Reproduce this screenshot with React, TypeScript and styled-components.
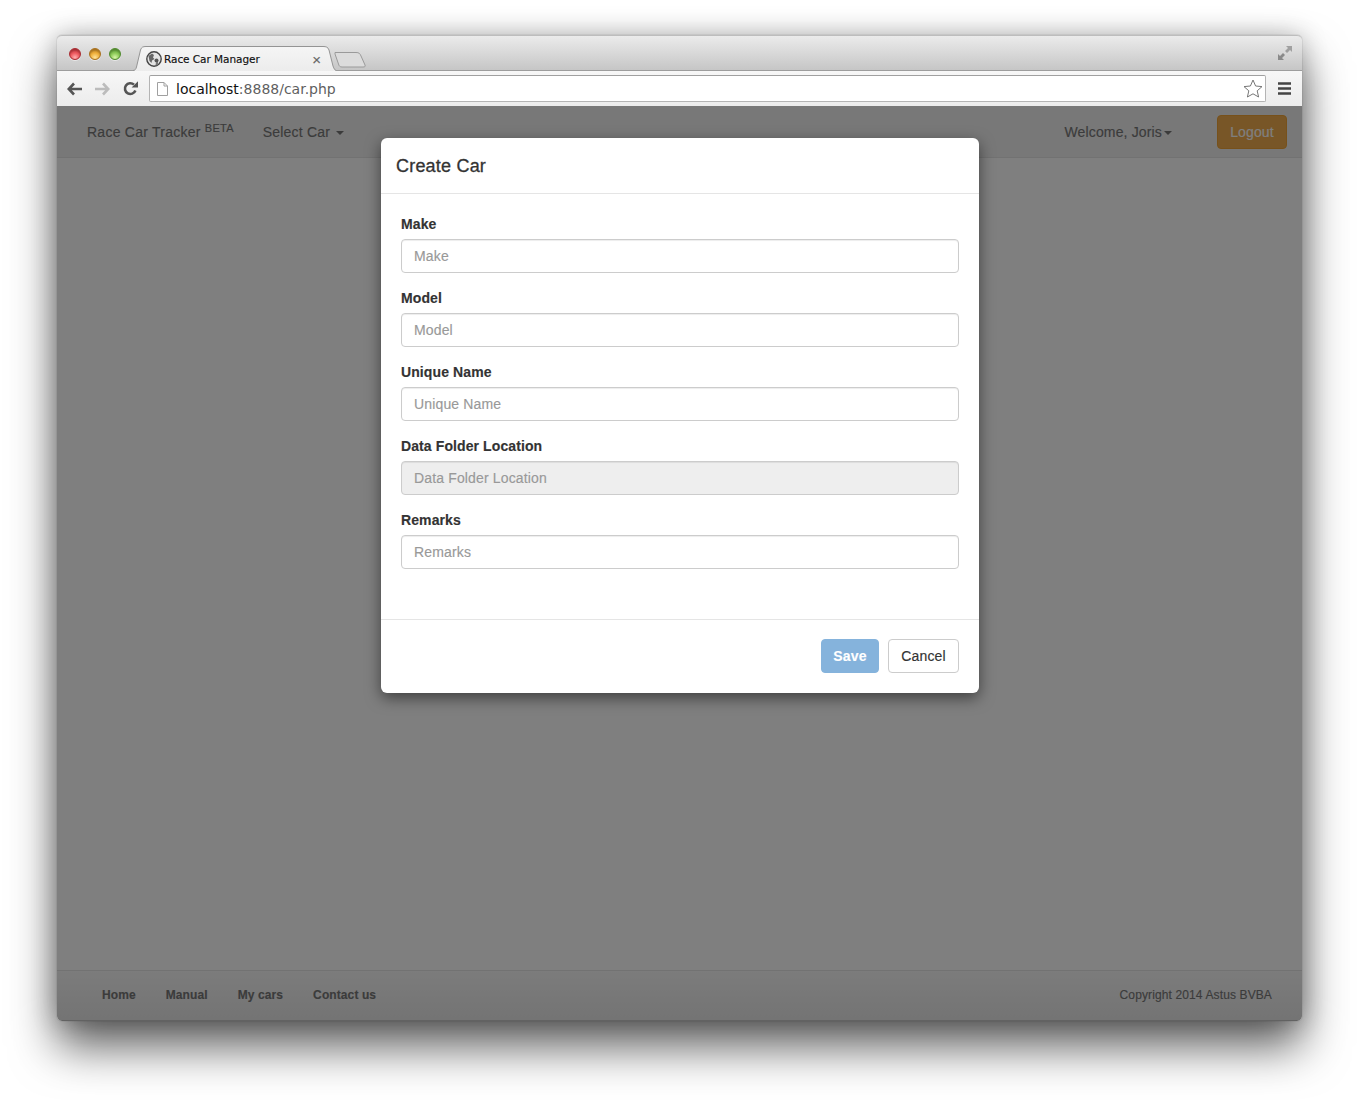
import React from "react";
import styled, { createGlobalStyle } from "styled-components";

const Global = createGlobalStyle`
  html, body { margin: 0; padding: 0; background: #fff; }
  body { font-family: "Liberation Sans", Arial, sans-serif; font-size: 14px; color: #333; -webkit-text-stroke: 0.15px; }
  * { box-sizing: border-box; }
`;

const Page = styled.div`
  width: 1359px;
  height: 1100px;
  padding: 35px 57px 79px 57px;
  overflow: hidden;
`;

const BrowserWindow = styled.div`
  width: 1245px;
  height: 986px;
  display: flex;
  flex-direction: column;
  border-radius: 5px;
  background: #fff;
  box-shadow: 0 26px 46px rgba(0, 0, 0, 0.62), 0 0 26px rgba(0, 0, 0, 0.24), 0 0 1px rgba(0, 0, 0, 0.5);
`;

const TitleBar = styled.div`
  height: 36px;
  flex: none;
  display: flex;
  align-items: flex-start;
  padding: 12px 9px 0 12px;
  background: linear-gradient(#ebebeb, #c6c6c6);
  border-top: 1px solid #bdbdbd;
  border-bottom: 1px solid #9d9d9d;
  border-radius: 5px 5px 0 0;
`;

const Lights = styled.div`
  display: flex;
  gap: 8px;
`;

const Light = styled.span<{ $c: string; $d: string; $l: string }>`
  width: 12px;
  height: 12px;
  border-radius: 50%;
  background: radial-gradient(circle at 50% 85%, ${(p) => p.$l} 0%, ${(p) => p.$c} 45%, ${(p) => p.$d} 95%);
  border: 1px solid ${(p) => p.$d};
  box-shadow: inset 0 2px 1px rgba(0, 0, 0, 0.12), 0 1px 0 rgba(255, 255, 255, 0.5);
`;

const TabWrap = styled.div`
  position: relative;
  width: 203px;
  height: 25px;
  margin: -2px 0 0 12px;
  display: flex;
  align-items: center;
  padding: 1px 14px 0 13px;
  flex: none;
`;

const TabShape = styled.svg`
  position: absolute;
  left: 0;
  top: 0;
`;

const Favicon = styled.svg`
  position: relative;
  flex: none;
`;

const TabTitle = styled.span`
  position: relative;
  margin-left: 2px;
  flex: 1;
  font: 10.5px/14px "DejaVu Sans", sans-serif;
  color: #111;
  white-space: nowrap;
  letter-spacing: -0.05px;
`;

const TabClose = styled.span`
  position: relative;
  font: 15px/14px "Liberation Sans", sans-serif;
  color: #666;
  margin: 1px 1px 0 0;
`;

const NewTab = styled.svg`
  flex: none;
  margin: 3px 0 0 -2px;
`;

const Spacer = styled.div`
  flex: 1;
`;

const ExpandIcon = styled.svg`
  flex: none;
  margin-top: -3px;
`;

const Toolbar = styled.div`
  height: 35px;
  flex: none;
  display: flex;
  align-items: center;
  padding: 0 10px;
  background: linear-gradient(#f7f7f7, #ececec);
`;

const NavIcon = styled.svg`
  flex: none;
  margin-right: 13px;
`;

const UrlBox = styled.div`
  width: 1117px;
  height: 27px;
  margin-left: -2px;
  display: flex;
  align-items: center;
  padding: 0 2px 0 7px;
  background: #fff;
  border: 1px solid #b4b4b4;
  border-top-color: #a0a0a0;
  border-radius: 2px;
  flex: none;
`;

const PageIcon = styled.svg`
  flex: none;
  margin-right: 8px;
`;

const UrlHost = styled.span`
  font: 14px/18px "DejaVu Sans", sans-serif;
  color: #111;
  -webkit-text-stroke: 0;
`;

const UrlPath = styled.span`
  font: 14px/18px "DejaVu Sans", sans-serif;
  color: #5f5f5f;
  flex: 1;
  -webkit-text-stroke: 0;
`;

const Burger = styled.svg`
  flex: none;
  margin-left: 12px;
`;

const Viewport = styled.div`
  position: relative;
  flex: 1;
  display: flex;
  flex-direction: column;
  min-height: 0;
  border-radius: 0 0 5px 5px;
  overflow: hidden;
`;

const NavBar = styled.nav`
  height: 52px;
  flex: none;
  display: flex;
  align-items: center;
  padding: 0 15px 0 30px;
  background: #f0f0f0;
  border-bottom: 1px solid #e4e4e4;
  color: #777;
`;

const Brand = styled.span`
  white-space: nowrap;
  letter-spacing: 0.25px;
`;

const Beta = styled.sup`
  font-size: 11px;
  line-height: 0;
  position: relative;
  top: 1px;
  vertical-align: super;
`;

const NavLink = styled.span`
  margin-left: 29px;
  white-space: nowrap;
  letter-spacing: 0.2px;
`;

const Caret = styled.span<{ $ml: number }>`
  display: inline-block;
  margin-left: ${(p) => p.$ml}px;
  vertical-align: middle;
  border-top: 4px solid currentColor;
  border-left: 4px solid transparent;
  border-right: 4px solid transparent;
`;

const Welcome = styled.span`
  margin-left: auto;
  margin-right: 45px;
  white-space: nowrap;
  letter-spacing: 0.15px;
`;

const Logout = styled.button`
  width: 70px;
  height: 34px;
  padding: 0;
  background: #f0ad4e;
  border: 1px solid #eea236;
  border-radius: 4px;
  color: #fff;
  font: 14px "Liberation Sans", sans-serif;
  letter-spacing: 0.15px;
`;

const Content = styled.main`
  flex: 1;
  background: #fff;
`;

const Footer = styled.footer`
  height: 51px;
  flex: none;
  display: flex;
  align-items: center;
  justify-content: space-between;
  padding: 0 30px 2px 45px;
  background: linear-gradient(#f8f8f8, #e8e8e8);
  border-top: 1px solid #e4e4e4;
  border-bottom: 1px solid #c4c4c4;
  font-size: 12px;
  color: #777;
`;

const FooterLinks = styled.div`
  display: flex;
  gap: 30px;
  font-weight: bold;
  letter-spacing: 0.1px;
`;

const Copyright = styled.span`
  letter-spacing: 0.12px;
`;

const Overlay = styled.div`
  position: absolute;
  inset: 0;
  background: rgba(0, 0, 0, 0.5);
`;

const Modal = styled.section`
  position: absolute;
  left: 324px;
  top: 32px;
  width: 598px;
  height: 555px;
  display: flex;
  flex-direction: column;
  background: #fff;
  border-radius: 6px;
  box-shadow: 0 5px 15px rgba(0, 0, 0, 0.5);
`;

const ModalHeader = styled.header`
  height: 56px;
  flex: none;
  padding: 15px;
  border-bottom: 1px solid #e5e5e5;
`;

const ModalTitle = styled.h4`
  margin: 0;
  font-size: 18px;
  font-weight: 400;
  line-height: 26px;
  color: #333;
  letter-spacing: 0.2px;
  -webkit-text-stroke: 0.3px #333;
`;

const ModalBody = styled.form`
  flex: 1;
  padding: 20px 20px 0;
`;

const Group = styled.div`
  margin-bottom: 15px;
`;

const Label = styled.label`
  display: block;
  margin-bottom: 5px;
  font-weight: bold;
  line-height: 20px;
  color: #333;
  letter-spacing: 0.1px;
`;

const Input = styled.input`
  display: block;
  width: 100%;
  height: 34px;
  padding: 6px 12px;
  border: 1px solid #ccc;
  border-radius: 4px;
  background: #fff;
  font: 14px "Liberation Sans", sans-serif;
  letter-spacing: 0.15px;
  color: #555;
  box-shadow: inset 0 1px 1px rgba(0, 0, 0, 0.075);
  &::placeholder { color: #999; opacity: 1; }
  &:disabled { background: #eee; }
`;

const ModalFooter = styled.footer`
  height: 74px;
  flex: none;
  display: flex;
  justify-content: flex-end;
  gap: 9px;
  padding: 19px 20px 20px;
  border-top: 1px solid #e5e5e5;
`;

const ModalButton = styled.button<{ $primary?: boolean }>`
  height: 34px;
  width: ${(p) => (p.$primary ? 58 : 71)}px;
  padding: 0;
  border-radius: 4px;
  font: ${(p) => (p.$primary ? "bold" : "normal")} 14px "Liberation Sans", sans-serif;
  letter-spacing: 0.15px;
  color: ${(p) => (p.$primary ? "#fff" : "#333")};
  background: ${(p) => (p.$primary ? "#85b3dc" : "#fff")};
  border: 1px solid ${(p) => (p.$primary ? "#85b3dc" : "#ccc")};
`;

const fields = [
  { name: "Make" },
  { name: "Model" },
  { name: "Unique Name" },
  { name: "Data Folder Location", disabled: true },
  { name: "Remarks" },
];

export default function App() {
  return (
    <Page>
      <Global />
      <BrowserWindow>
        <TitleBar>
          <Lights>
            <Light $l="#ffb0b0" $c="#ee5a60" $d="#a92a30" />
            <Light $l="#ffe39a" $c="#f0b03c" $d="#a9701c" />
            <Light $l="#d8f7a8" $c="#8ccb58" $d="#4f8a2c" />
          </Lights>
          <TabWrap>
            <TabShape width="203" height="25" viewBox="0 0 203 25">
              <defs>
                <linearGradient id="tabfill" x1="0" y1="0" x2="0" y2="1">
                  <stop offset="0" stopColor="#f5f5f5" />
                  <stop offset="1" stopColor="#ececec" />
                </linearGradient>
              </defs>
              <path d="M0 25 C2 24.5 3 23 3.5 21 L7.5 4 C8.5 1 10 0.5 13 0.5 L190 0.5 C193 0.5 195 1 196 4 L200 20 C201 23 202 24 203 25 Z" fill="url(#tabfill)" />
              <path d="M0 24.5 C2 24.5 3 23 3.5 21 L7.5 4 C8.5 1 10 0.5 13 0.5 L190 0.5 C193 0.5 195 1 196 4 L200 20 C201 23 202 24 203 24.5" fill="none" stroke="#949494" />
            </TabShape>
            <Favicon width="16" height="16" viewBox="0 0 16 16">
              <circle cx="8" cy="8" r="7.2" fill="#e4e4e4" stroke="#444" strokeWidth="1.4" />
              <path d="M2.5 5 L6 2.5 L8 4 L7 6.5 L8.5 8 L6 9.5 L5.5 12 L3.5 10 Z" fill="#666" />
              <circle cx="10.5" cy="9.5" r="2" fill="#555" />
              <path d="M10 11 L9.5 14.5 L12 14 L12 11 Z" fill="#777" />
            </Favicon>
            <TabTitle>Race Car Manager</TabTitle>
            <TabClose>×</TabClose>
          </TabWrap>
          <NewTab width="33" height="17" viewBox="0 0 33 17">
            <path d="M1 1.5 L22 1.5 C25 1.5 26 2.5 27 5 L31 14 C31.5 15.5 31 16 29 16 L8 16 C6 16 5 15 4.5 13 L1 3 Z" fill="#dcdcdc" stroke="#9a9a9a" />
          </NewTab>
          <Spacer />
          <ExpandIcon width="16" height="16" viewBox="0 0 16 16">
            <path d="M9 1 H15 V7 L13 5 L10 8 L8 6 L11 3 Z" fill="#a0a0a0" />
            <path d="M7 15 H1 V9 L3 11 L6 8 L8 10 L5 13 Z" fill="#8a8a8a" />
          </ExpandIcon>
        </TitleBar>
        <Toolbar>
          <NavIcon width="15" height="14" viewBox="0 0 15 14">
            <path d="M7 1.5 L1.8 7 L7 12.5 M2 7 H15" fill="none" stroke="#555" strokeWidth="2.6" />
          </NavIcon>
          <NavIcon width="15" height="14" viewBox="0 0 15 14">
            <path d="M8 1.5 L13.2 7 L8 12.5 M13 7 H0" fill="none" stroke="#bcbcbc" strokeWidth="2.6" />
          </NavIcon>
          <NavIcon width="15" height="15" viewBox="0 0 15 15">
            <path d="M12.4 9.5 A5.4 5.4 0 1 1 11 3.6" fill="none" stroke="#555" strokeWidth="2.6" />
            <path d="M8.6 6.6 H15 V0.2 Z" fill="#555" />
          </NavIcon>
          <UrlBox>
            <PageIcon width="11" height="14" viewBox="0 0 11 14">
              <path d="M0.5 0.5 H7 L10.5 4 V13.5 H0.5 Z M7 0.5 V4 H10.5" fill="#fff" stroke="#a0a0a0" />
            </PageIcon>
            <UrlHost>localhost</UrlHost>
            <UrlPath>:8888/car.php</UrlPath>
            <svg width="20" height="19" viewBox="0 0 20 19">
              <path d="M10 1 L12.6 7 L19 7.6 L14.2 11.8 L15.6 18 L10 14.8 L4.4 18 L5.8 11.8 L1 7.6 L7.4 7 Z" fill="#fff" stroke="#777" />
            </svg>
          </UrlBox>
          <Burger width="13" height="13" viewBox="0 0 13 13">
            <path d="M0 1.5 H13 M0 6.5 H13 M0 11.5 H13" stroke="#444" strokeWidth="2.4" />
          </Burger>
        </Toolbar>
        <Viewport>
          <NavBar>
            <Brand>
              Race Car Tracker <Beta>BETA</Beta>
            </Brand>
            <NavLink>
              Select Car
              <Caret $ml={6} />
            </NavLink>
            <Welcome>
              Welcome, Joris
              <Caret $ml={2} />
            </Welcome>
            <Logout type="button">Logout</Logout>
          </NavBar>
          <Content />
          <Footer>
            <FooterLinks>
              <span>Home</span>
              <span>Manual</span>
              <span>My cars</span>
              <span>Contact us</span>
            </FooterLinks>
            <Copyright>Copyright 2014 Astus BVBA</Copyright>
          </Footer>
          <Overlay />
          <Modal>
            <ModalHeader>
              <ModalTitle>Create Car</ModalTitle>
            </ModalHeader>
            <ModalBody>
              {fields.map((f) => (
                <Group key={f.name}>
                  <Label>{f.name}</Label>
                  <Input placeholder={f.name} disabled={f.disabled} />
                </Group>
              ))}
            </ModalBody>
            <ModalFooter>
              <ModalButton type="button" $primary>
                Save
              </ModalButton>
              <ModalButton type="button">Cancel</ModalButton>
            </ModalFooter>
          </Modal>
        </Viewport>
      </BrowserWindow>
    </Page>
  );
}
